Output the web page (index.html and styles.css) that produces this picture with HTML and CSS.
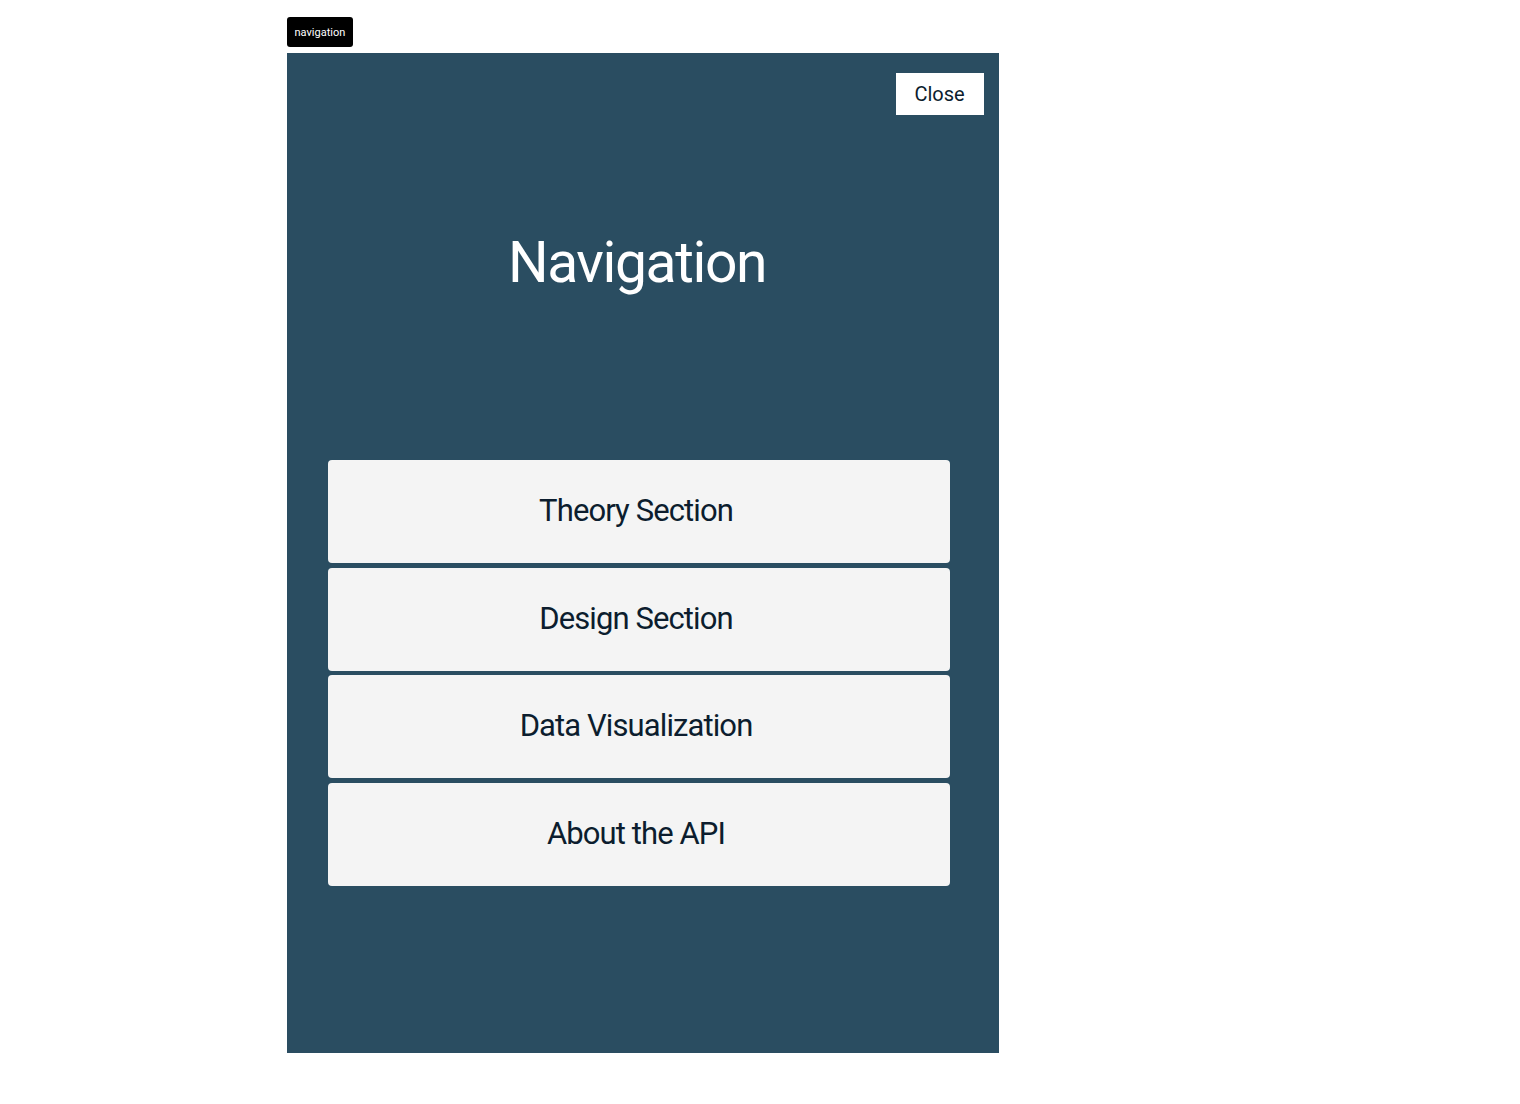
FILE: index.html
```html
<!DOCTYPE html>
<html>
<head>
<meta charset="utf-8">
<link rel="stylesheet" href="styles.css">
</head>
<body>
<div class="page">
  <div class="tag">navigation</div>
  <div class="panel">
    <div class="panel-top">
      <button class="close">Close</button>
    </div>
    <h1 class="title">Navigation</h1>
    <nav class="links">
      <a class="link">Theory Section</a>
      <a class="link">Design Section</a>
      <a class="link">Data Visualization</a>
      <a class="link">About the API</a>
    </nav>
  </div>
</div>
</body>
</html>
```
FILE: styles.css
```css
html, body {
  margin: 0;
  padding: 0;
  background: #ffffff;
  font-family: Roboto, "Liberation Sans", sans-serif;
}
.page {
  padding: 17px 0 0 287px;
  width: 712px;
}
.tag {
  display: inline-flex;
  align-items: center;
  height: 30px;
  padding: 0 7.5px;
  background: #000;
  color: #fff;
  font-size: 11px;
  border-radius: 3px;
  box-sizing: border-box;
}
.panel {
  margin-top: 6px;
  width: 712px;
  height: 1000px;
  background: #2a4d61;
  box-sizing: border-box;
  padding: 20px 15px 0 41px;
}
.panel-top {
  display: flex;
  justify-content: flex-end;
}
.close {
  width: 88px;
  height: 42px;
  background: #fff;
  border: none;
  border-radius: 0;
  font-family: Roboto, "Liberation Sans", sans-serif;
  font-size: 20px;
  color: #0c1d2e;
  padding: 0 1px 0 0;
}
.title {
  margin: 113px 0 0 0;
  padding-right: 38px;
  text-align: center;
  color: #fff;
  font-weight: 400;
  font-size: 57px;
  line-height: 70px;
  letter-spacing: -1.4px;
}
.links {
  margin-top: 162px;
  width: 622px;
  display: flex;
  flex-direction: column;
  gap: 4.5px;
}
.link {
  height: 103px;
  background: #f4f4f4;
  border-radius: 4px;
  display: flex;
  align-items: center;
  justify-content: center;
  color: #0c1d2e;
  font-size: 31px;
  letter-spacing: -0.9px;
  padding: 0 6px 2px 0;
  box-sizing: border-box;
}
```
